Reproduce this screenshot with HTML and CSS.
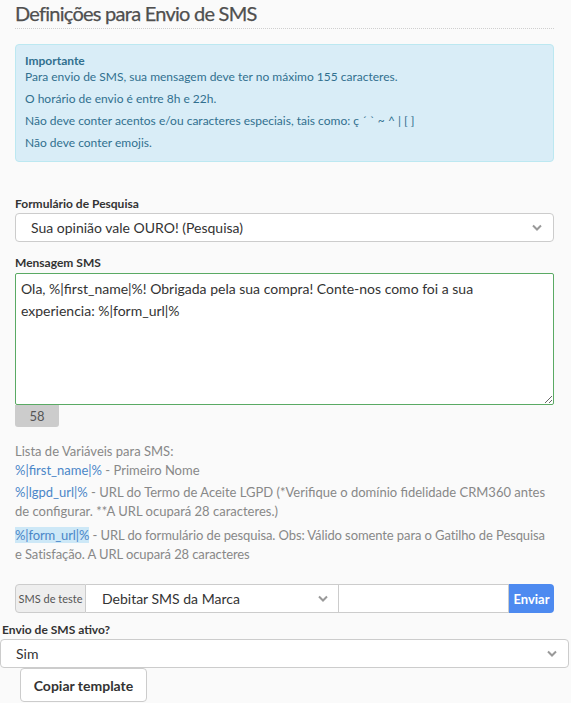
FILE: index.html
```html
<!DOCTYPE html>
<html lang="pt-BR">
<head>
<meta charset="utf-8">
<title>Definições para Envio de SMS</title>
<link rel="stylesheet" href="styles.css">
</head>
<body>
<div class="page">
  <div class="section">
    <h2 class="title">Definições para Envio de SMS</h2>

    <div class="alert">
      <div class="alert-title">Importante</div>
      <p>Para envio de SMS, sua mensagem deve ter no máximo 155 caracteres.</p>
      <p>O horário de envio é entre 8h e 22h.</p>
      <p>Não deve conter acentos e/ou caracteres especiais, tais como: ç ´ ` ~ ^ | [ ]</p>
      <p>Não deve conter emojis.</p>
    </div>

    <div class="field field-form">
      <div class="label">Formulário de Pesquisa</div>
      <div class="select select-indent">
        <span>Sua opinião vale OURO! (Pesquisa)</span>
        <svg class="chev" width="10" height="7" viewBox="0 0 10 7"><path d="M1 1.5 L5 5.5 L9 1.5" fill="none" stroke="#999" stroke-width="2"/></svg>
      </div>
    </div>

    <div class="field field-msg">
      <div class="label">Mensagem SMS</div>
      <textarea class="message" readonly>Ola, %|first_name|%! Obrigada pela sua compra! Conte-nos como foi a sua experiencia: %|form_url|%</textarea>
      <div class="counter">58</div>
    </div>

    <div class="vars">
      <p class="v1">Lista de Variáveis para SMS:<br><span class="var">%|first_name|%</span> - Primeiro Nome</p>
      <p class="v2"><span class="var">%|lgpd_url|%</span> - URL do Termo de Aceite LGPD (*Verifique o domínio fidelidade CRM360 antes de configurar. **A URL ocupará 28 caracteres.)</p>
      <p class="v3"><span class="var var-hl">%|form_url|%</span> - URL do formulário de pesquisa. Obs: Válido somente para o Gatilho de Pesquisa e Satisfação. A URL ocupará 28 caracteres</p>
    </div>

    <div class="input-group">
      <div class="addon">SMS de teste</div>
      <div class="group-select">
        <span>Debitar SMS da Marca</span>
        <svg class="chev" width="10" height="7" viewBox="0 0 10 7"><path d="M1 1.5 L5 5.5 L9 1.5" fill="none" stroke="#999" stroke-width="2"/></svg>
      </div>
      <div class="group-input"></div>
      <button class="btn-send" type="button">Enviar</button>
    </div>
  </div>

  <div class="field field-active">
    <div class="label label-active">Envio de SMS ativo?</div>
    <div class="select select-wide">
      <span>Sim</span>
      <svg class="chev" width="10" height="7" viewBox="0 0 10 7"><path d="M1 1.5 L5 5.5 L9 1.5" fill="none" stroke="#999" stroke-width="2"/></svg>
    </div>
  </div>

  <div class="actions">
    <button class="btn-copy" type="button">Copiar template</button>
  </div>
</div>
</body>
</html>
```

FILE: styles.css
```css
* { box-sizing: border-box; }

html, body {
  margin: 0;
  padding: 0;
  background: #fafafa;
}

body {
  font-family: Lato, "Liberation Sans", Arial, sans-serif;
  color: #333;
  width: 571px;
  height: 703px;
  overflow: hidden;
}

.page {
  display: flex;
  flex-direction: column;
}

.section {
  padding: 0 17px 0 15px;
  display: flex;
  flex-direction: column;
}

.title {
  margin: 0;
  padding-top: 1px;
  height: 29px;
  font-size: 20px;
  line-height: 24px;
  font-weight: 400;
  letter-spacing: -0.75px;
  color: #4f4f4f;
  -webkit-text-stroke: 0.25px #4f4f4f;
  border-bottom: 1px dotted #cfcfcf;
}

.alert {
  margin-top: 15px;
  padding: 8px 9px 10px;
  background: #d9edf7;
  border: 1px solid #bce8f1;
  border-radius: 4px;
  color: #31708f;
  font-size: 12px;
  line-height: 16px;
  height: 118px;
}

.alert-title {
  font-weight: 700;
}

.alert p {
  margin: 0 0 6px;
}

.alert p:last-child { margin-bottom: 0; }

.label {
  font-size: 12px;
  line-height: 16px;
  font-weight: 700;
  color: #333;
  margin-bottom: 1px;
}

.field-form { margin-top: 34px; }
.field-msg { margin-top: 13px; }
.field-msg .label { margin-bottom: 2px; }

.select {
  height: 29px;
  display: flex;
  align-items: center;
  justify-content: space-between;
  background: #fff;
  border: 1px solid #ccc;
  border-radius: 4px;
  font-size: 14px;
  color: #333;
  padding: 0 11px 0 15px;
}

.select-indent { padding-left: 15px; }

.chev { flex: none; }

.message {
  display: block;
  width: 100%;
  height: 132px;
  margin: 0;
  padding: 4px 5px;
  font-family: Lato, "Liberation Sans", Arial, sans-serif;
  font-size: 14px;
  line-height: 22px;
  color: #333;
  background: #fff;
  border: 1px solid #5aaa64;
  border-radius: 2px;
  resize: vertical;
  outline: none;
}

.counter {
  width: 44px;
  height: 22px;
  background: #ccc;
  color: #555;
  font-size: 13px;
  line-height: 22px;
  text-align: center;
  border-radius: 0 0 3px 3px;
}

.vars {
  margin-top: 15px;
  font-size: 13px;
  line-height: 19px;
  color: #888;
}

.vars p { margin: 0; }
.vars .v1 { margin-bottom: 3px; }
.vars .v2 { margin-bottom: 5px; }
.vars .v3 { letter-spacing: -0.1px; }

.var { color: #4a86c8; }

.var-hl { background: #cde8f7; }

.input-group {
  margin-top: 20px;
  display: flex;
  height: 29px;
}

.addon {
  width: 71px;
  flex: none;
  display: flex;
  align-items: center;
  justify-content: center;
  background: #eee;
  border: 1px solid #ccc;
  border-radius: 4px 0 0 4px;
  font-size: 11px;
  color: #555;
}

.group-select {
  width: 253px;
  flex: none;
  display: flex;
  align-items: center;
  justify-content: space-between;
  background: #fff;
  border: 1px solid #ccc;
  border-left: 0;
  font-size: 14px;
  color: #333;
  padding: 0 10px 0 16px;
}

.group-input {
  flex: 1;
  background: #fff;
  border: 1px solid #ccc;
  border-left: 0;
}

.btn-send {
  width: 45px;
  flex: none;
  background: #4d8af0;
  color: #fff;
  border: 0;
  border-radius: 0 4px 4px 0;
  font-family: Lato, "Liberation Sans", Arial, sans-serif;
  font-size: 13px;
  font-weight: 700;
  padding: 0;
}

.field-active { margin-top: 9px; }

.label-active { padding-left: 2px; }

.select-wide {
  width: 569px;
  padding-left: 15px;
}

.actions {
  padding-left: 20px;
}

.btn-copy {
  width: 127px;
  height: 34px;
  background: #fff;
  border: 1px solid #ccc;
  border-radius: 4px;
  font-family: Lato, "Liberation Sans", Arial, sans-serif;
  font-size: 14px;
  font-weight: 700;
  color: #333;
  padding: 0;
}
```
